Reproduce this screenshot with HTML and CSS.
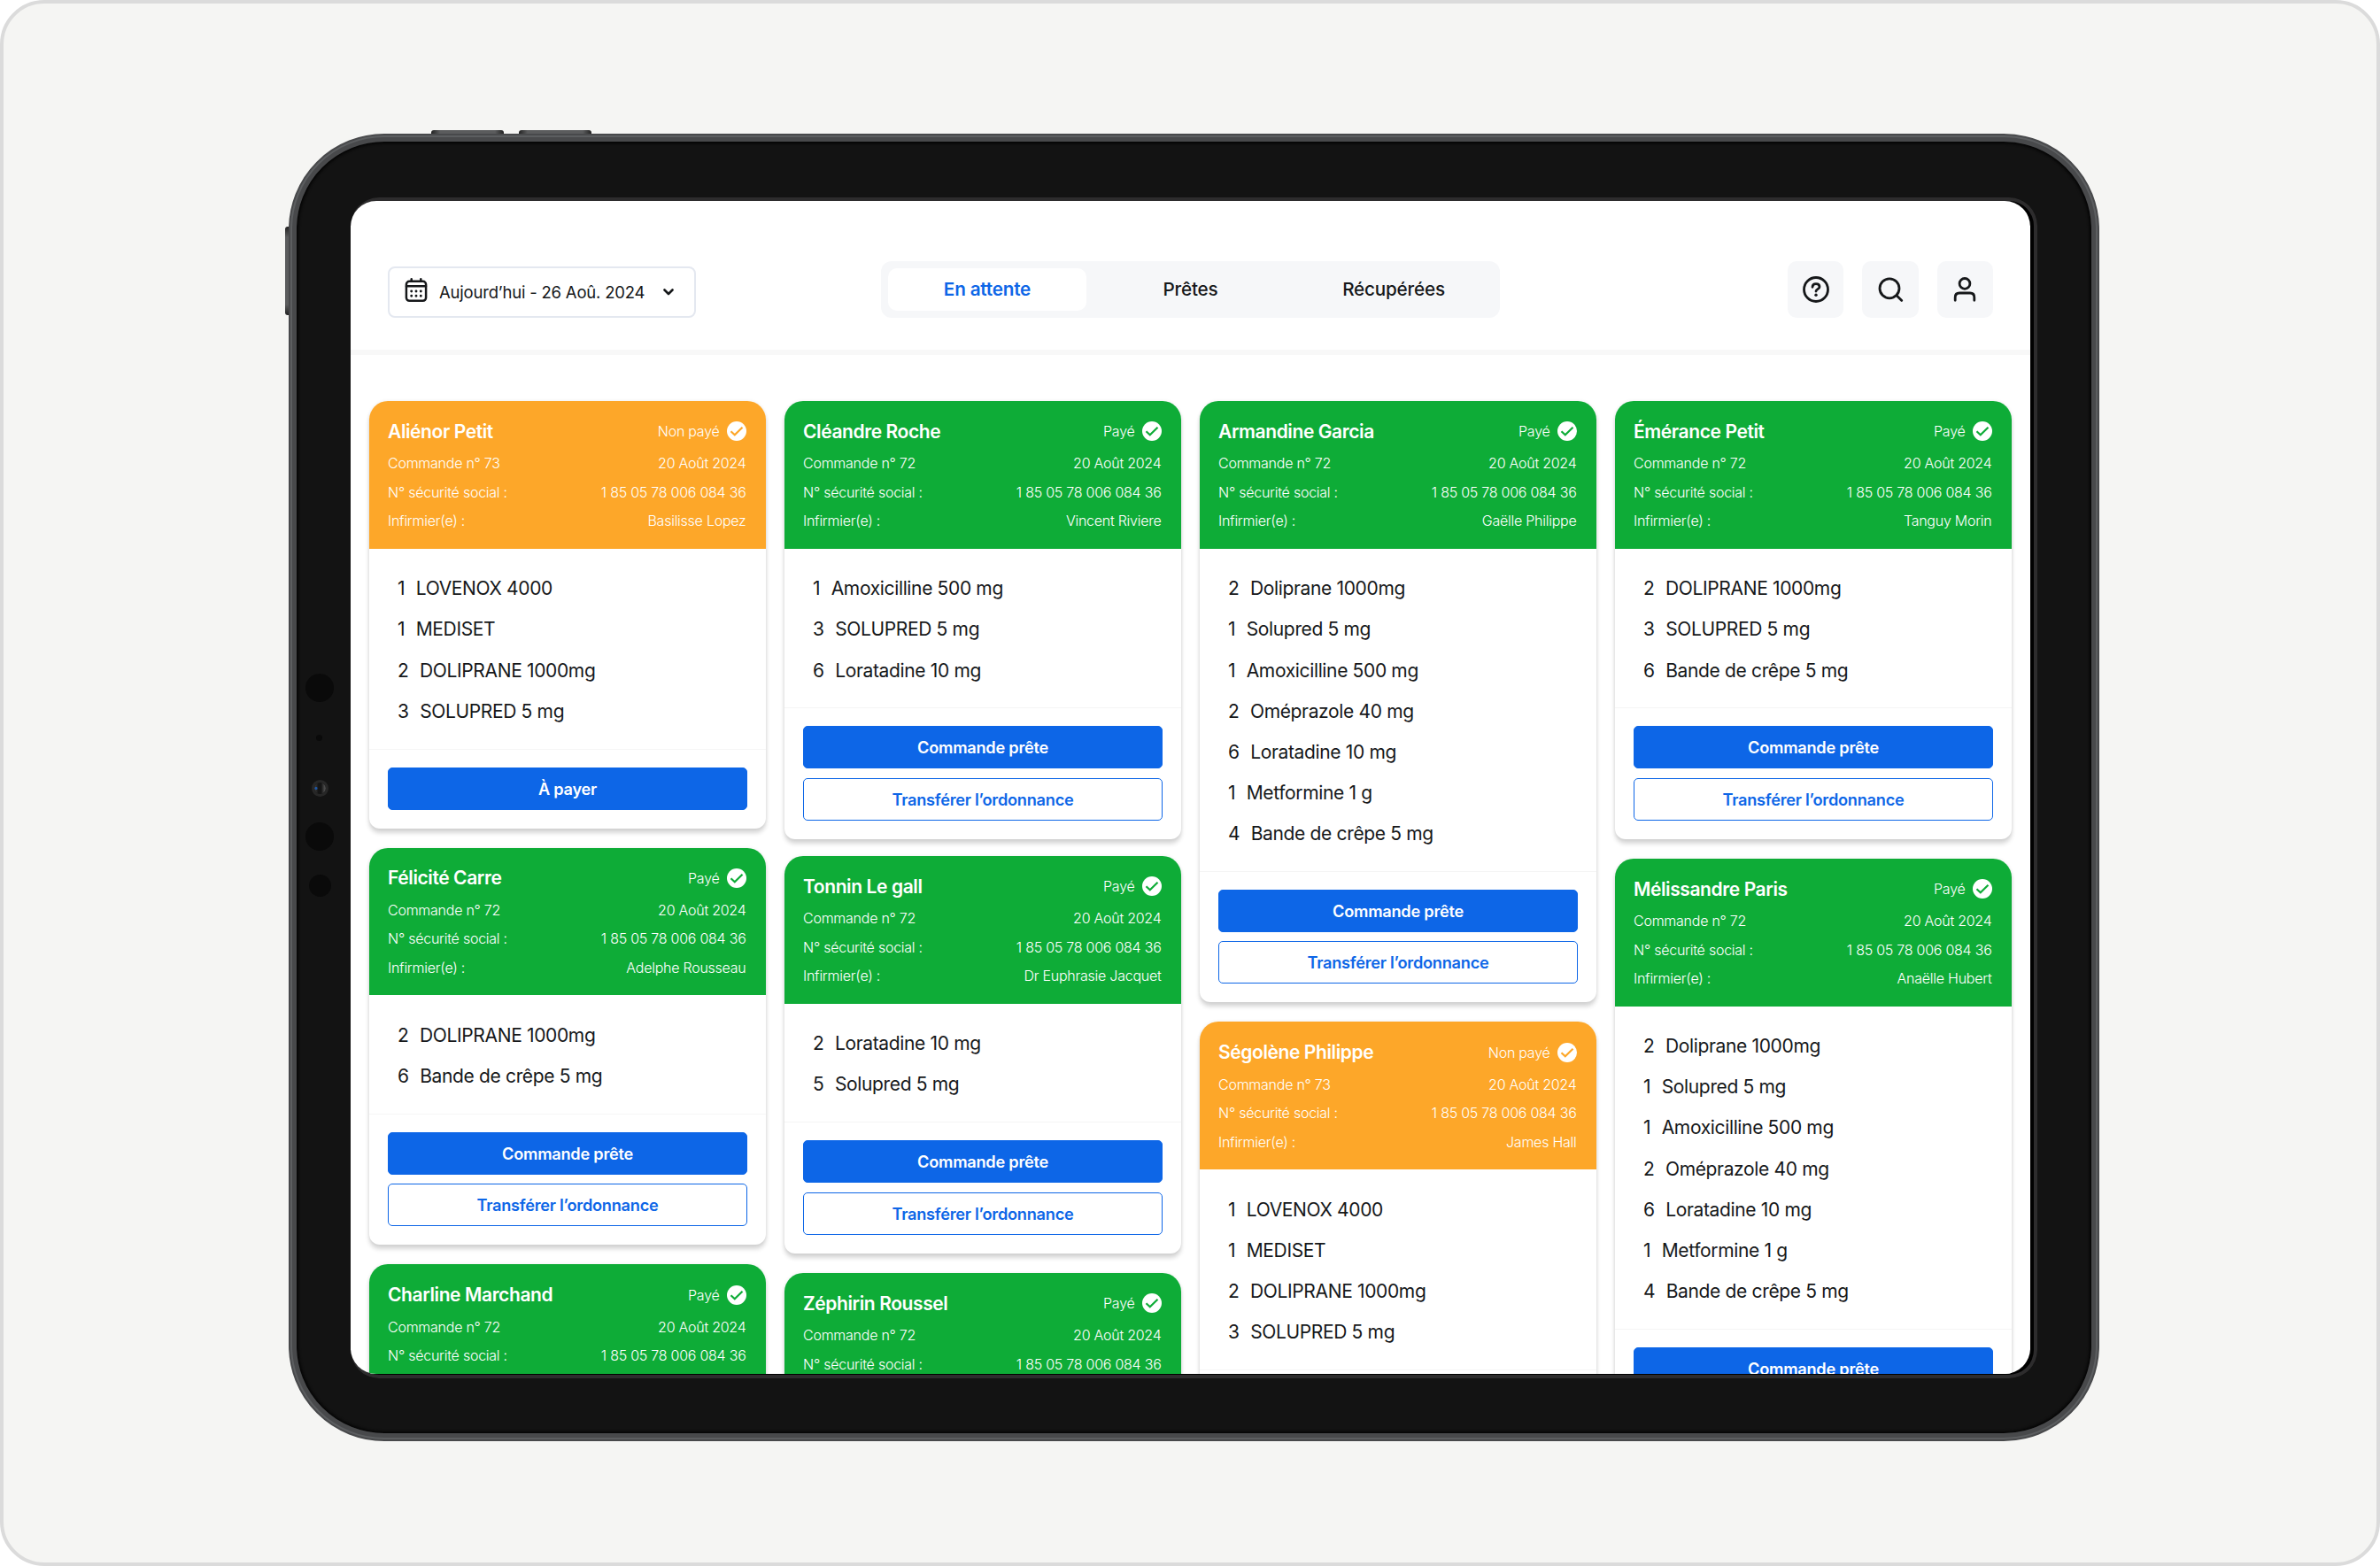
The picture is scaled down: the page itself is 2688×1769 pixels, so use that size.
FILE: index.html
```html
<!DOCTYPE html>
<html lang="fr">
<head>
    <meta charset="UTF-8">
    <meta name="viewport" content="width=device-width, initial-scale=1.0">
    <title>Commandes</title>
    <link rel="stylesheet" href="styles.css">
</head>
<body>
    <svg class="sprite" aria-hidden="true">
        <symbol id="check" viewBox="0 0 22 22">
            <circle cx="11" cy="11" r="11" fill="#fff"/>
            <path d="M4.500 11.200l4.300 4.100L17.500 6.700" fill="none" stroke="currentColor" stroke-width="2.200"/>
        </symbol>
    </svg>

    <div class="stage">
        <div class="tablet">
            <!-- boutons et capteurs du châssis -->
            <span class="key key-vol1"></span>
            <span class="key key-vol2"></span>
            <span class="key key-power"></span>
            <span class="sensor s1"></span>
            <span class="sensor s2"></span>
            <span class="sensor lens"></span>
            <span class="sensor s3"></span>
            <span class="sensor s4"></span>

            <div class="bezel">
                <div class="screen">
                    <header class="topbar">
                        <div class="date">
                            <svg class="ico-cal" viewBox="0 0 26 28" fill="none" stroke="#16181a" stroke-width="2.500" stroke-linecap="round">
                                <rect x="1.900" y="3.800" width="22.200" height="22" rx="3.500"/>
                                <path d="M2 9.200h22M7.700 1.300v2.500M18.300 1.300v2.500"/>
                                <path d="M7.700 15h.01M13 15h.01M18.300 15h.01M7.700 20.300h.01M13 20.300h.01M18.300 20.300h.01" stroke-width="2.900"/>
                            </svg>
                            <span>Aujourd’hui - 26 Aoû. 2024</span>
                            <svg class="ico-chevron" viewBox="0 0 12 8" fill="none" stroke="#16181a" stroke-width="2.600" stroke-linecap="round" stroke-linejoin="round"><path d="M1.500 1.500L6 6l4.500-4.500"/></svg>
                        </div>
                        <nav class="tabs">
                            <span class="tab active">En attente</span>
                            <span class="tab">Prêtes</span>
                            <span class="tab">Récupérées</span>
                        </nav>
                        <div class="actions">
                            <span class="action">
                                <svg viewBox="0 0 32 32" fill="none" stroke="#16181a" stroke-width="2.800" stroke-linecap="round" stroke-linejoin="round">
                                    <circle cx="16" cy="16" r="13.500"/>
                                    <path d="M12 13.300c.1-2.300 1.700-3.600 4-3.600 2.400 0 4 1.300 4 3.300 0 2.800-4 2.500-4 5"/>
                                    <path d="M16 22.300h.01" stroke-width="3.400"/>
                                </svg>
                            </span>
                            <span class="action">
                                <svg viewBox="0 0 32 32" fill="none" stroke="#16181a" stroke-width="2.800" stroke-linecap="round">
                                    <circle cx="15" cy="14.800" r="11"/>
                                    <path d="M23 22.800l5.800 5.600"/>
                                </svg>
                            </span>
                            <span class="action">
                                <svg viewBox="0 0 32 32" fill="none" stroke="#16181a" stroke-width="2.800" stroke-linecap="round">
                                    <circle cx="16" cy="9.400" r="5.900"/>
                                    <path d="M5.200 28.300v-3.400c0-3 1.900-4.900 4.800-4.900h12c2.900 0 4.800 1.900 4.800 4.900v3.400"/>
                                </svg>
                            </span>
                        </div>
                    </header>

                    <main class="board">
                        <div class="column">
                            <article class="card unpaid">
                                <div class="card-head">
                                    <div class="row title"><h2>Aliénor Petit</h2><span class="status">Non payé <svg><use href="#check"/></svg></span></div>
                                    <div class="row"><span>Commande n° 73</span><span>20 Août 2024</span></div>
                                    <div class="row"><span>N° sécurité social :</span><span>1 85 05 78 006 084 36</span></div>
                                    <div class="row"><span>Infirmier(e) :</span><span>Basilisse Lopez</span></div>
                                </div>
                                <ul class="items">
                                    <li><b>1</b>LOVENOX 4000</li>
                                    <li><b>1</b>MEDISET</li>
                                    <li><b>2</b>DOLIPRANE 1000mg</li>
                                    <li><b>3</b>SOLUPRED 5 mg</li>
                                </ul>
                                <div class="card-foot">
                                    <button class="btn">À payer</button>
                                </div>
                            </article>
                            <article class="card">
                                <div class="card-head">
                                    <div class="row title"><h2>Félicité Carre</h2><span class="status">Payé <svg><use href="#check"/></svg></span></div>
                                    <div class="row"><span>Commande n° 72</span><span>20 Août 2024</span></div>
                                    <div class="row"><span>N° sécurité social :</span><span>1 85 05 78 006 084 36</span></div>
                                    <div class="row"><span>Infirmier(e) :</span><span>Adelphe Rousseau</span></div>
                                </div>
                                <ul class="items">
                                    <li><b>2</b>DOLIPRANE 1000mg</li>
                                    <li><b>6</b>Bande de crêpe 5 mg</li>
                                </ul>
                                <div class="card-foot">
                                    <button class="btn">Commande prête</button>
                                    <button class="btn outline">Transférer l’ordonnance</button>
                                </div>
                            </article>
                            <article class="card">
                                <div class="card-head">
                                    <div class="row title"><h2>Charline Marchand</h2><span class="status">Payé <svg><use href="#check"/></svg></span></div>
                                    <div class="row"><span>Commande n° 72</span><span>20 Août 2024</span></div>
                                    <div class="row"><span>N° sécurité social :</span><span>1 85 05 78 006 084 36</span></div>
                                </div>
                            </article>
                        </div>

                        <div class="column">
                            <article class="card tight">
                                <div class="card-head">
                                    <div class="row title"><h2>Cléandre Roche</h2><span class="status">Payé <svg><use href="#check"/></svg></span></div>
                                    <div class="row"><span>Commande n° 72</span><span>20 Août 2024</span></div>
                                    <div class="row"><span>N° sécurité social :</span><span>1 85 05 78 006 084 36</span></div>
                                    <div class="row"><span>Infirmier(e) :</span><span>Vincent Riviere</span></div>
                                </div>
                                <ul class="items">
                                    <li><b>1</b>Amoxicilline 500 mg</li>
                                    <li><b>3</b>SOLUPRED 5 mg</li>
                                    <li><b>6</b>Loratadine 10 mg</li>
                                </ul>
                                <div class="card-foot">
                                    <button class="btn">Commande prête</button>
                                    <button class="btn outline">Transférer l’ordonnance</button>
                                </div>
                            </article>
                            <article class="card">
                                <div class="card-head">
                                    <div class="row title"><h2>Tonnin Le gall</h2><span class="status">Payé <svg><use href="#check"/></svg></span></div>
                                    <div class="row"><span>Commande n° 72</span><span>20 Août 2024</span></div>
                                    <div class="row"><span>N° sécurité social :</span><span>1 85 05 78 006 084 36</span></div>
                                    <div class="row"><span>Infirmier(e) :</span><span>Dr Euphrasie Jacquet</span></div>
                                </div>
                                <ul class="items">
                                    <li><b>2</b>Loratadine 10 mg</li>
                                    <li><b>5</b>Solupred 5 mg</li>
                                </ul>
                                <div class="card-foot">
                                    <button class="btn">Commande prête</button>
                                    <button class="btn outline">Transférer l’ordonnance</button>
                                </div>
                            </article>
                            <article class="card">
                                <div class="card-head">
                                    <div class="row title"><h2>Zéphirin Roussel</h2><span class="status">Payé <svg><use href="#check"/></svg></span></div>
                                    <div class="row"><span>Commande n° 72</span><span>20 Août 2024</span></div>
                                    <div class="row"><span>N° sécurité social :</span><span>1 85 05 78 006 084 36</span></div>
                                </div>
                            </article>
                        </div>

                        <div class="column">
                            <article class="card">
                                <div class="card-head">
                                    <div class="row title"><h2>Armandine Garcia</h2><span class="status">Payé <svg><use href="#check"/></svg></span></div>
                                    <div class="row"><span>Commande n° 72</span><span>20 Août 2024</span></div>
                                    <div class="row"><span>N° sécurité social :</span><span>1 85 05 78 006 084 36</span></div>
                                    <div class="row"><span>Infirmier(e) :</span><span>Gaëlle Philippe</span></div>
                                </div>
                                <ul class="items">
                                    <li><b>2</b>Doliprane 1000mg</li>
                                    <li><b>1</b>Solupred 5 mg</li>
                                    <li><b>1</b>Amoxicilline 500 mg</li>
                                    <li><b>2</b>Oméprazole 40 mg</li>
                                    <li><b>6</b>Loratadine 10 mg</li>
                                    <li><b>1</b>Metformine 1 g</li>
                                    <li><b>4</b>Bande de crêpe 5 mg</li>
                                </ul>
                                <div class="card-foot">
                                    <button class="btn">Commande prête</button>
                                    <button class="btn outline">Transférer l’ordonnance</button>
                                </div>
                            </article>
                            <article class="card unpaid">
                                <div class="card-head">
                                    <div class="row title"><h2>Ségolène Philippe</h2><span class="status">Non payé <svg><use href="#check"/></svg></span></div>
                                    <div class="row"><span>Commande n° 73</span><span>20 Août 2024</span></div>
                                    <div class="row"><span>N° sécurité social :</span><span>1 85 05 78 006 084 36</span></div>
                                    <div class="row"><span>Infirmier(e) :</span><span>James Hall</span></div>
                                </div>
                                <ul class="items">
                                    <li><b>1</b>LOVENOX 4000</li>
                                    <li><b>1</b>MEDISET</li>
                                    <li><b>2</b>DOLIPRANE 1000mg</li>
                                    <li><b>3</b>SOLUPRED 5 mg</li>
                                </ul>
                                <div class="card-foot"></div>
                            </article>
                        </div>

                        <div class="column">
                            <article class="card">
                                <div class="card-head">
                                    <div class="row title"><h2>Émérance Petit</h2><span class="status">Payé <svg><use href="#check"/></svg></span></div>
                                    <div class="row"><span>Commande n° 72</span><span>20 Août 2024</span></div>
                                    <div class="row"><span>N° sécurité social :</span><span>1 85 05 78 006 084 36</span></div>
                                    <div class="row"><span>Infirmier(e) :</span><span>Tanguy Morin</span></div>
                                </div>
                                <ul class="items">
                                    <li><b>2</b>DOLIPRANE 1000mg</li>
                                    <li><b>3</b>SOLUPRED 5 mg</li>
                                    <li><b>6</b>Bande de crêpe 5 mg</li>
                                </ul>
                                <div class="card-foot">
                                    <button class="btn">Commande prête</button>
                                    <button class="btn outline">Transférer l’ordonnance</button>
                                </div>
                            </article>
                            <article class="card">
                                <div class="card-head">
                                    <div class="row title"><h2>Mélissandre Paris</h2><span class="status">Payé <svg><use href="#check"/></svg></span></div>
                                    <div class="row"><span>Commande n° 72</span><span>20 Août 2024</span></div>
                                    <div class="row"><span>N° sécurité social :</span><span>1 85 05 78 006 084 36</span></div>
                                    <div class="row"><span>Infirmier(e) :</span><span>Anaëlle Hubert</span></div>
                                </div>
                                <ul class="items">
                                    <li><b>2</b>Doliprane 1000mg</li>
                                    <li><b>1</b>Solupred 5 mg</li>
                                    <li><b>1</b>Amoxicilline 500 mg</li>
                                    <li><b>2</b>Oméprazole 40 mg</li>
                                    <li><b>6</b>Loratadine 10 mg</li>
                                    <li><b>1</b>Metformine 1 g</li>
                                    <li><b>4</b>Bande de crêpe 5 mg</li>
                                </ul>
                                <div class="card-foot">
                                    <button class="btn">Commande prête</button>
                                </div>
                            </article>
                        </div>
                    </main>
                </div>
            </div>
        </div>
    </div>
</body>
</html>
```

FILE: styles.css
```css
* {
    box-sizing: border-box;
}

body {
    margin: 0;
    background-color: #fff;
    font-family: 'Inter', 'Liberation Sans', sans-serif;
    color: #16181a;
}

.sprite {
    display: none;
}

.stage {
    width: 2688px;
    height: 1769px;
    padding: 147px 0 0 322px;
    border: 4px solid #dbdbdb;
    border-radius: 50px;
    background-color: #f5f5f3;
    overflow: hidden;
}

/* Tablette */
.tablet {
    position: relative;
    width: 2045px;
    height: 1477px;
    padding: 63px 61px 62px;
    border: 9px solid #48494b;
    border-radius: 108px;
    background-color: #131313;
    box-shadow: inset 0 0 3px 2px #050505;
}

.tablet::before {
    content: "";
    position: absolute;
    inset: -7px;
    border: 2px solid #5c5e60;
    border-radius: 106px;
}

.bezel {
    width: 1905px;
    height: 1334px;
    padding: 4px 8px 4px 0;
    border-radius: 32px;
    background-color: #000;
    box-shadow: inset 0 0 0 4px #2d2c2d;
}

.screen {
    width: 1897px;
    height: 1325px;
    border-radius: 29px;
    background-color: #fff;
    overflow: hidden;
}

.key {
    position: absolute;
    background: linear-gradient(90deg, #222, #5b5c5d 12%, #5b5c5d 88%, #222);
}

.key-vol1,
.key-vol2 {
    top: -13px;
    width: 82px;
    height: 4px;
    border-radius: 3px 3px 0 0;
}

.key-vol1 {
    left: 152px;
}

.key-vol2 {
    left: 251px;
}

.key-power {
    left: -13px;
    top: 96px;
    width: 4px;
    height: 100px;
    border-radius: 3px 0 0 3px;
    background: linear-gradient(#222, #5b5c5d 12%, #5b5c5d 88%, #222);
}

.sensor {
    position: absolute;
    border-radius: 50%;
    background-color: #0a0a0a;
}

.s1 {
    left: 10px;
    top: 601px;
    width: 32px;
    height: 32px;
}

.s2 {
    left: 22px;
    top: 670px;
    width: 7px;
    height: 7px;
}

.lens {
    left: 17px;
    top: 721px;
    width: 19px;
    height: 19px;
    border: 3px solid #272727;
    background: radial-gradient(circle at 15% 50%, #1c56a8 0 8%, transparent 16%) padding-box, linear-gradient(90deg, #3a3a3a 5%, #151515 35%, #151515 60%, #4c4c4c 90%) padding-box;
}

.s3 {
    left: 10px;
    top: 769px;
    width: 32px;
    height: 32px;
}

.s4 {
    left: 14px;
    top: 828px;
    width: 25px;
    height: 25px;
}

/* Barre du haut */
.topbar {
    display: grid;
    grid-template-columns: 1fr auto 1fr;
    align-items: center;
    height: 174px;
    padding: 32px 42px 0 42px;
    border-bottom: 6px solid #f8f8f8;
}

.date {
    display: flex;
    align-items: center;
    width: 348px;
    height: 58px;
    margin-top: 5px;
    padding-left: 17px;
    border: 2px solid #e4e8f0;
    border-radius: 8px;
    font-size: 18.500px;
    letter-spacing: -0.200px;
    white-space: nowrap;
}

.ico-cal {
    width: 26px;
    height: 28px;
    margin: -3px 13px 0 0;
}

.ico-chevron {
    width: 12px;
    height: 8px;
    margin-left: 21px;
}

.tabs {
    display: flex;
    gap: 6px;
    height: 64px;
    padding: 8px;
    border-radius: 12px;
    background-color: #f6f7f9;
}

.tab {
    width: 223.500px;
    border-radius: 10px;
    font-size: 20.700px;
    font-weight: 500;
    letter-spacing: -0.200px;
    line-height: 48px;
    text-align: center;
}

.tab.active {
    background-color: #fff;
    color: #0d66e7;
    font-weight: 600;
}

.actions {
    display: flex;
    justify-content: flex-end;
    gap: 21px;
}

.action {
    display: flex;
    align-items: center;
    justify-content: center;
    width: 63.300px;
    height: 64px;
    border-radius: 10px;
    background-color: #f6f7f9;
}

.action svg {
    width: 32px;
    height: 32px;
}

/* Commandes */
.board {
    display: grid;
    grid-template-columns: repeat(4, 1fr);
    gap: 21px;
    padding: 52px 21px 0 21px;
}

.column {
    display: flex;
    flex-direction: column;
    gap: 22px;
}

.card {
    border-radius: 21px 21px 12px 12px;
    background-color: #fff;
    box-shadow: 0 5px 5px rgba(0, 0, 0, 0.16), 0 0 4px rgba(0, 0, 0, 0.07);
}

.card.tight {
    margin-bottom: -3px;
}

.card-head {
    height: 166.600px;
    padding: 14.500px 22.500px 0 21px;
    border-radius: 21px 21px 0 0;
    background-color: #0eac37;
    color: #fff;
}

.unpaid .card-head {
    background-color: #fda729;
}

.row {
    display: flex;
    align-items: center;
    justify-content: space-between;
    height: 32.600px;
    font-size: 16px;
    font-weight: 300;
    letter-spacing: -0.250px;
}

.row.title {
    height: 39.400px;
}

.row h2 {
    margin: 0;
    font-size: 21px;
    font-weight: 600;
    letter-spacing: -0.400px;
}

.status {
    display: flex;
    align-items: center;
    gap: 8px;
}

.status svg {
    width: 22px;
    height: 22px;
    color: #0eac37;
}

.unpaid .status svg {
    color: #fda729;
}

.items {
    margin: 0;
    padding: 22.200px 32px 19.400px;
    list-style: none;
}

.items li {
    display: flex;
    align-items: center;
    gap: 12.500px;
    height: 46.100px;
    font-size: 21px;
    letter-spacing: -0.350px;
}

.items b {
    font-weight: 400;
}

.card-foot {
    display: flex;
    flex-direction: column;
    gap: 10.500px;
    padding: 20px 21px 21px;
    border-top: 1px solid #f5f5f5;
}

.btn {
    height: 48px;
    padding: 0;
    border: 1.500px solid #0d66e7;
    border-radius: 5px;
    background-color: #0d66e7;
    color: #fff;
    font-family: inherit;
    font-size: 18.200px;
    font-weight: 600;
    letter-spacing: -0.250px;
}

.btn.outline {
    background-color: #fff;
    color: #0d66e7;
}
```
